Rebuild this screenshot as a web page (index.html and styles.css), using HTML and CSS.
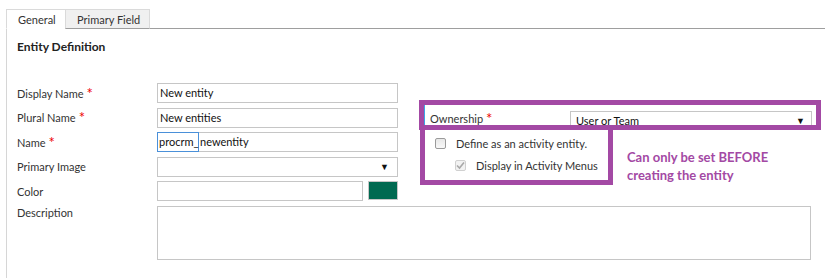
FILE: index.html
```html
<!DOCTYPE html>
<html lang="en">
<head>
  <meta charset="UTF-8" />
  <title>Entity Definition</title>
  <link rel="stylesheet" href="styles.css">
</head>
<body>

<div class="tabs">
  <div class="tab active">General</div>
  <div class="tab">Primary Field</div>
  <div class="tab-fill"></div>
</div>

<div class="panel">
  <h3>Entity Definition</h3>

  <div class="form">
    <div class="col-left">
      <div class="row">
        <label>Display Name<span class="req">*</span></label>
        <div class="input">New entity</div>
      </div>
      <div class="row">
        <label>Plural Name<span class="req">*</span></label>
        <div class="input">New entities</div>
      </div>
      <div class="row">
        <label>Name<span class="req">*</span></label>
        <div class="input split">
          <span class="prefix">procrm_</span><span class="rest">newentity</span>
        </div>
      </div>
      <div class="row">
        <label>Primary Image</label>
        <div class="input select"><span></span><span class="arrow">&#9660;</span></div>
      </div>
      <div class="row">
        <label>Color</label>
        <div class="color-wrap">
          <div class="input color-input"></div>
          <div class="swatch"></div>
        </div>
      </div>
    </div>

    <div class="col-right">
      <div class="mark owner">
        <label>Ownership<span class="req">*</span></label>
        <div class="input select owner-select"><span>User or Team</span><span class="arrow">&#9660;</span></div>
      </div>
      <div class="below">
        <div class="mark activity">
          <div class="check-row">
            <span class="cb"></span>
            <span>Define as an activity entity.</span>
          </div>
          <div class="check-row sub">
            <span class="cb checked">
              <svg width="9" height="9" viewBox="0 0 9 9"><path d="M1 4.5 L3.5 7 L8 1.5" fill="none" stroke="#a8a8a8" stroke-width="1.6"/></svg>
            </span>
            <span>Display in Activity Menus</span>
          </div>
        </div>
        <div class="note">Can only be set BEFORE<br>creating the entity</div>
      </div>
    </div>
  </div>

  <div class="row desc-row">
    <label>Description</label>
    <div class="input textarea"></div>
  </div>
</div>

</body>
</html>
```

FILE: styles.css
```css
body {
  margin: 0;
  font-family: 'Segoe UI', Lato, 'Noto Sans', sans-serif;
  font-size: 11px;
  color: #333;
  background: #fff;
  overflow: hidden;
}

.tabs {
  display: flex;
  margin: 9px 0 0 6px;
  height: 20px;
}

.tab {
  box-sizing: border-box;
  width: 85px;
  padding-left: 11px;
  line-height: 19px;
  border: 1px solid #dadada;
  border-bottom: 1px solid #9e9e9e;
  background: #f0f0f0;
  color: #333;
}

.tab.active {
  width: 59px;
  background: #fff;
  border-right: none;
  border-bottom-color: #fff;
}

.tab-fill {
  flex: 1;
  border-bottom: 1px solid #9e9e9e;
}

.panel {
  margin-left: 6px;
  border-left: 1px solid #d6d6d6;
  padding: 0 0 19px 10px;
}

h3 {
  margin: 0;
  padding-top: 10px;
  font-size: 12px;
  font-weight: bold;
  color: #222;
  height: 44px;
}

.form {
  display: flex;
  gap: 21px;
}

.col-left {
  display: flex;
  flex-direction: column;
  gap: 4.6px;
}

.row {
  display: flex;
  align-items: center;
  height: 20px;
}

.row label {
  width: 140px;
  flex: none;
}

.req {
  color: #e00;
  margin-left: 3px;
  font-size: 15px;
  line-height: 0;
  position: relative;
  top: 1px;
}

.input {
  box-sizing: border-box;
  width: 241px;
  height: 20px;
  border: 1px solid #c6c6c6;
  padding: 0 2px;
  line-height: 18px;
  color: #111;
  background: #fff;
}

.split {
  display: flex;
  padding: 0;
}

.prefix {
  border: 1px solid #4a90d9;
  margin: -1px 0 -1px -1px;
  padding: 0 1px;
  line-height: 18px;
  width: 38px;
}

.rest {
  padding-left: 1px;
}

.select {
  display: flex;
  justify-content: space-between;
  padding: 0 8px 0 4px;
}

.arrow {
  font-size: 9px;
  color: #111;
}

.color-wrap {
  display: flex;
  gap: 5px;
}

.color-input {
  width: 206px;
}

.swatch {
  box-sizing: border-box;
  width: 30px;
  height: 19px;
  background: #006a51;
  border: 1px solid #c6c6c6;
}

.col-right {
  margin-top: 17px;
  display: flex;
  flex-direction: column;
}

.mark {
  border: 5px solid #a349a4;
  box-sizing: border-box;
}

.owner {
  width: 402px;
  height: 30px;
  display: flex;
  align-items: flex-start;
  overflow: hidden;
  box-shadow: inset 1px 0 0 #3aa6e6;
  position: relative;
  z-index: 1;
}

.owner label {
  width: 146px;
  flex: none;
  padding: 6px 0 0 6px;
  box-sizing: border-box;
  line-height: 16px;
}

.owner-select {
  margin-top: 6px;
  width: 242px;
  padding: 1px 6px 0 5px;
  line-height: 16px;
}

.below {
  display: flex;
  gap: 14px;
}

.activity {
  margin: -5px 0 0 1px;
  width: 193px;
  height: 60px;
  padding: 6px 0 0 10px;
  position: relative;
  z-index: 2;
}

.check-row {
  display: flex;
  align-items: center;
  gap: 10px;
  height: 14px;
  white-space: nowrap;
}

.check-row.sub {
  margin: 8px 0 0 20px;
}

.cb {
  box-sizing: border-box;
  flex: none;
  width: 11px;
  height: 11px;
  border: 1px solid #9a9a9a;
  border-radius: 2px;
  background: linear-gradient(#e8e8e8, #f8f8f8);
  display: flex;
  align-items: center;
  justify-content: center;
}

.cb.checked {
  border-color: #d0d0d0;
  background: #f2f2f2;
}

.note {
  margin-top: 18px;
  color: #a349a4;
  font-weight: bold;
  font-size: 13px;
  line-height: 18px;
}

.desc-row {
  margin-top: 5px;
  align-items: flex-start;
  height: 54px;
}

.textarea {
  width: 654px;
  height: 54px;
}
```
